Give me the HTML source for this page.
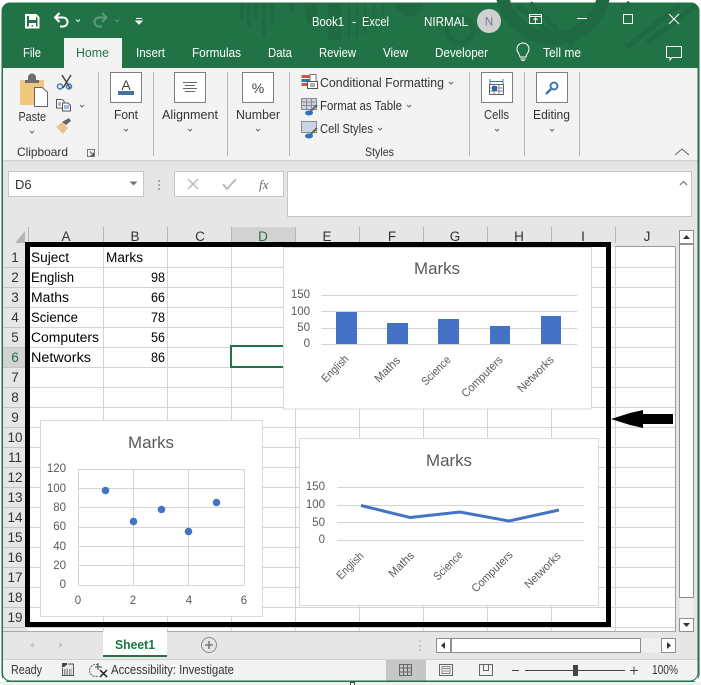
<!DOCTYPE html>
<html><head><meta charset="utf-8"><style>
html,body{margin:0;padding:0;background:#fff;width:701px;height:685px;overflow:hidden}
svg{display:block;font-family:"Liberation Sans",sans-serif}
.g{stroke:#d4d4d4;stroke-width:1;fill:none}
.cl{fill:#595959;font-size:11.5px}
.ax{fill:#595959;font-size:11.5px;text-anchor:end}
.tt{fill:#595959;font-size:17px;text-anchor:middle}
.c{fill:#000;font-size:13.5px}
.ch{fill:#333;font-size:13.5px;text-anchor:middle}
.w{fill:#fff;font-size:13px}
.r{fill:#333;font-size:13px}
.cv{fill:none;stroke:#666;stroke-width:1}
</style></head><body>
<svg width="701" height="685" viewBox="0 0 701 685" xmlns="http://www.w3.org/2000/svg">
<rect width="701" height="685" fill="#fff"/>
<!-- window -->
<rect x="2" y="3" width="697" height="679" rx="8" fill="#e6e6e6" stroke="#217346" stroke-width="1"/>
<path d="M2 68V11a8 8 0 0 1 8-8H691a8 8 0 0 1 8 8V68Z" fill="#217346"/>
<!-- title pattern -->
<g fill="none" stroke="#1f6a41">
<path d="M242 3V18M249 3V27M256 3V20M264 3V36M272 3V24" stroke-width="3.500"/>
<path d="M287 3H294V17Z" fill="#1f6a41" stroke="none"/>
<path d="M305 3H317V26H311Q305 20 305 14Z" fill="#1f6a41" stroke="none"/>
<path d="M328 3H341V40H328Z" fill="#1f6a41" stroke="none"/>
<path d="M349 3V37M357 3V37M365 3V35M374 3V28M383 3V14" stroke-width="2.500"/>
<path d="M396 3H423A13.500 13.500 0 0 1 396 3Z" fill="#1f6a41" stroke="none"/>
<circle cx="460" cy="30" r="13" stroke-width="5"/>
<circle cx="553" cy="-13" r="51.500" stroke-width="13"/>
<path d="M505 8L547 43M517 5L561 42M530 3L573 46" stroke-width="5"/>
<path d="M627 47L680 5M647 43L696 5M622 8L630 3" stroke-width="5"/>
</g>
<!-- tabs -->
<rect x="64" y="38" width="58" height="31" fill="#f3f3f3"/>
<rect x="3" y="68" width="695" height="92" fill="#f3f3f3"/>
<rect x="3" y="160" width="695" height="1.500" fill="#d2d2d2"/>
<!-- QAT -->
<path d="M26 15H36L38.500 17.500V27.500H26Z" fill="none" stroke="#fff" stroke-width="2"/>
<rect x="29" y="15" width="7" height="5" fill="#fff"/><path d="M29 23H36V27.500H33V25H31.500V27.500H29Z" fill="#fff"/>
<path d="M55 17.500H63a4.500 4.500 0 0 1 0 9H60" fill="none" stroke="#fff" stroke-width="2"/><path d="M59.500 13L55 17.500L59.500 22" fill="none" stroke="#fff" stroke-width="2"/>
<path d="M76 19.500l2 2 2-2" fill="none" stroke="#dfe" stroke-width="1"/>
<path d="M106 17.500H99a4.500 4.500 0 0 0 0 9H102" fill="none" stroke="#5d9a7c" stroke-width="2"/><path d="M102 13L106.500 17.500L102 22" fill="none" stroke="#5d9a7c" stroke-width="2"/>
<path d="M115 19.500l2 2 2-2" fill="none" stroke="#5d9a7c" stroke-width="1"/>
<path d="M136 18.500H142M136 21H142L139 24Z" fill="#fff" stroke="#fff" stroke-width="1"/>
<text x="312" y="26" class="w" textLength="32" lengthAdjust="spacingAndGlyphs">Book1</text>
<text x="352" y="26" class="w">-</text>
<text x="362" y="26" class="w" textLength="27" lengthAdjust="spacingAndGlyphs">Excel</text>
<text x="424" y="26" class="w" textLength="44" lengthAdjust="spacingAndGlyphs">NIRMAL</text>
<circle cx="489" cy="21" r="12" fill="#d0d0d0"/>
<text x="489" y="25.500" font-size="11.500" text-anchor="middle" fill="#76769a">N</text>
<!-- window buttons -->
<rect x="529.500" y="16.500" width="12" height="7" fill="none" stroke="#fff"/><path d="M529.500 16.500h12v-2h-12zM535.500 23.500v-5M533.500 20l2-2 2 2" fill="none" stroke="#fff"/>
<path d="M577 18.500H587" stroke="#fff" stroke-width="1"/>
<rect x="623.500" y="14.500" width="9" height="9" fill="none" stroke="#fff" stroke-width="1"/>
<path d="M669 14L679 24M679 14L669 24" stroke="#fff" stroke-width="1"/>
<!-- tab labels -->
<text x="23" y="57" class="w" textLength="18" lengthAdjust="spacingAndGlyphs">File</text>
<text x="76" y="57" font-size="13" fill="#217346" textLength="33" lengthAdjust="spacingAndGlyphs">Home</text>
<text x="136" y="57" class="w" textLength="29" lengthAdjust="spacingAndGlyphs">Insert</text>
<text x="192" y="57" class="w" textLength="49" lengthAdjust="spacingAndGlyphs">Formulas</text>
<text x="268" y="57" class="w" textLength="24" lengthAdjust="spacingAndGlyphs">Data</text>
<text x="319" y="57" class="w" textLength="37" lengthAdjust="spacingAndGlyphs">Review</text>
<text x="383" y="57" class="w" textLength="25" lengthAdjust="spacingAndGlyphs">View</text>
<text x="435" y="57" class="w" textLength="53" lengthAdjust="spacingAndGlyphs">Developer</text>
<path d="M520 57c0-3-3-4-3-8a6 6 0 0 1 12 0c0 4-3 5-3 8ZM520.500 59h5M521.500 60.500h3" fill="none" stroke="#fff"/>
<text x="543" y="57" class="w" textLength="38" lengthAdjust="spacingAndGlyphs">Tell me</text>
<path d="M666.500 46.500H681.500V57.500H672L670 60V57.500H666.500Z" fill="none" stroke="#fff"/>
<!-- ribbon separators -->
<path d="M98.500 72V156M153.500 72V156M227.500 72V156M289.500 72V156M469.500 72V156M524.500 72V156M579.500 72V156" stroke="#b9b9b9" stroke-width="1"/>
<!-- Paste -->
<path d="M20 80H44V105H20Z" fill="#f0c77c"/>
<path d="M28 80V77.500a4 4 0 0 1 8 0V80H39V83H25V80Z" fill="#6f6f6f"/>
<path d="M34.500 87.500H42L47.500 92V106.500H34.500Z" fill="#fff" stroke="#666"/>
<path d="M62 75L70 88M71 75L63 88" stroke="#444" stroke-width="1.500"/>
<circle cx="60" cy="86.500" r="2.500" fill="none" stroke="#3f78b5" stroke-width="1.500"/><circle cx="69" cy="86.500" r="2.500" fill="none" stroke="#3f78b5" stroke-width="1.500"/>
<path d="M56.500 99.500H62L64 101V108H56.500Z" fill="#fff" stroke="#555"/><path d="M62.500 103H68L70.500 105.500V111H62.500Z" fill="#fff" stroke="#555"/><path d="M58 103H61M58 105H61M64 106H69M64 108H69" stroke="#3f78b5"/>
<path d="M80 105l2 2 2-2" class="cv"/>
<path d="M56 127L62 122L68 128L63 134Z" fill="#e9c58c"/><path d="M62 122L66 125L71 121L69 118Z" fill="#666"/>
<text x="18.500" y="121" class="r" textLength="27.500" lengthAdjust="spacingAndGlyphs">Paste</text>
<path d="M30 131l2 2 2-2" class="cv"/>
<text x="17" y="156" font-size="12" fill="#333" textLength="51" lengthAdjust="spacingAndGlyphs">Clipboard</text>
<path d="M87.500 149.500H94.500V156.500H87.500Z" fill="none" stroke="#777"/><path d="M90 151.500L93.500 155.500M93.500 152.500V155.500H90.500" fill="none" stroke="#555"/>
<!-- group buttons -->
<g fill="#fff" stroke="#7f7f7f">
<rect x="110.500" y="72.500" width="31" height="30"/>
<rect x="174.500" y="72.500" width="31" height="30"/>
<rect x="242.500" y="72.500" width="31" height="30"/>
<rect x="481.500" y="72.500" width="31" height="30"/>
<rect x="536.500" y="72.500" width="31" height="30"/>
</g>
<text x="126" y="90" font-size="14" text-anchor="middle" fill="#444">A</text>
<rect x="118" y="91" width="16" height="4" fill="#4472a8"/>
<path d="M183 82.500H197M185 85.500H195M183 88.500H197M185 91.500H195" stroke="#666"/>
<text x="258" y="93" font-size="14" text-anchor="middle" fill="#444">%</text>
<path d="M490 81.500H503M490 79V84M503 79V84" stroke="#3f78b5"/>
<rect x="489.500" y="84.500" width="14" height="10" fill="none" stroke="#666"/><path d="M494 85V94M499 85V94M490 88H503M490 91H503" stroke="#888"/><rect x="492" y="86" width="5" height="5" fill="#2a65ae"/>
<circle cx="554" cy="86" r="3.500" fill="none" stroke="#3f78b5" stroke-width="2"/><path d="M551 89L546 94" stroke="#3f78b5" stroke-width="2.500"/>
<text x="114" y="119" class="r" textLength="24" lengthAdjust="spacingAndGlyphs">Font</text>
<text x="162" y="119" class="r" textLength="56" lengthAdjust="spacingAndGlyphs">Alignment</text>
<text x="236" y="119" class="r" textLength="44" lengthAdjust="spacingAndGlyphs">Number</text>
<text x="484" y="119" class="r" textLength="25" lengthAdjust="spacingAndGlyphs">Cells</text>
<text x="533" y="119" class="r" textLength="37" lengthAdjust="spacingAndGlyphs">Editing</text>
<path d="M124 129l2 2 2-2M188 129l2 2 2-2M256 129l2 2 2-2M495 129l2 2 2-2M550 129l2 2 2-2" class="cv"/>
<!-- styles -->
<rect x="301.500" y="75" width="8" height="3" fill="#d0573a"/><rect x="301.500" y="79" width="8" height="3" fill="#2e75b6"/><rect x="301.500" y="83" width="8" height="3" fill="#d0573a"/>
<rect x="310" y="74.500" width="6" height="7" fill="#fff" stroke="#777"/>
<rect x="307.500" y="81.500" width="10" height="7" fill="#fff" stroke="#555"/>
<path d="M310 84H315M310 86H315" stroke="#333" stroke-width=".7"/>
<g fill="none" stroke="#8a8a8a">
<rect x="301.500" y="98.500" width="15" height="11" fill="#c9d4e4"/><path d="M301.500 102H316.500M301.500 105.500H316.500M306.500 98.500V109.500M311.500 98.500V109.500"/>
<rect x="301.500" y="121.500" width="15" height="11" fill="#c9d4e4"/>
</g>
<path d="M310 112L317 105M310 135L317 128" stroke="#666" stroke-width="2"/>
<ellipse cx="309" cy="113" rx="4" ry="2.500" fill="#2e75b6"/><ellipse cx="309" cy="136" rx="4" ry="2.500" fill="#2e75b6"/>
<text x="320" y="87" class="r" textLength="124" lengthAdjust="spacingAndGlyphs">Conditional Formatting</text>
<text x="320" y="110" class="r" textLength="82" lengthAdjust="spacingAndGlyphs">Format as Table</text>
<text x="320" y="133" class="r" textLength="53" lengthAdjust="spacingAndGlyphs">Cell Styles</text>
<path d="M449 82l2 2 2-2M407 105l2 2 2-2M378 128l2 2 2-2" class="cv"/>
<text x="365" y="156" font-size="12" fill="#333" textLength="29" lengthAdjust="spacingAndGlyphs">Styles</text>
<path d="M675 155L682 149L689 155" fill="none" stroke="#666"/>
<!-- formula bar -->
<rect x="8.500" y="171.500" width="135" height="25" fill="#fff" stroke="#c6c6c6"/>
<text x="15" y="189" font-size="13" fill="#333">D6</text>
<path d="M129.500 181.500H137.500L133.500 185.500Z" fill="#777"/>
<path d="M159 180v2M159 184v2M159 188v2" stroke="#aaa" stroke-width="2"/>
<rect x="174.500" y="171.500" width="109" height="25" fill="#fff" stroke="#c6c6c6"/>
<path d="M188 179L198 189M198 179L188 189" stroke="#bbb" stroke-width="1.500"/>
<path d="M223 184L227 189L236 179" fill="none" stroke="#bbb" stroke-width="2"/>
<text x="259" y="189" font-size="13" font-style="italic" font-family="Liberation Serif" fill="#666">fx</text>
<rect x="287.500" y="171.500" width="404" height="45" fill="#fff" stroke="#c6c6c6"/>
<path d="M680 185L683.500 181.500L687 185" fill="none" stroke="#888" stroke-width="1.500"/>
<!-- column headers -->
<rect x="3" y="227" width="672" height="20" fill="#e6e6e6"/>
<rect x="231" y="227" width="64" height="20" fill="#d2d2d2"/>
<path d="M25 231V243H15Z" fill="#b5b5b5"/>
<path d="M28.500 227V243M103.500 227V243M167.500 227V243M231.500 227V243M295.500 227V243M359.500 227V243M423.500 227V243M487.500 227V243M551.500 227V243M615.500 227V243" stroke="#b5b5b5"/>
<text x="66" y="241" class="ch">A</text><text x="135" y="241" class="ch">B</text><text x="200" y="241" class="ch">C</text><text x="263" y="241" fill="#217346" font-size="13.500" text-anchor="middle">D</text><text x="327" y="241" class="ch">E</text><text x="392" y="241" class="ch">F</text><text x="455" y="241" class="ch">G</text><text x="519" y="241" class="ch">H</text><text x="583" y="241" class="ch">I</text><text x="647" y="241" class="ch">J</text>
<!-- sheet -->
<rect x="28" y="247" width="647" height="385" fill="#fff"/>
<path class="g" d="M28 267.500H675M28 287.500H675M28 307.500H675M28 327.500H675M28 347.500H675M28 367.500H675M28 387.500H675M28 407.500H675M28 427.500H675M28 447.500H675M28 467.500H675M28 487.500H675M28 507.500H675M28 527.500H675M28 547.500H675M28 567.500H675M28 587.500H675M28 607.500H675M28 627.500H675"/>
<path class="g" d="M103.500 247V632M167.500 247V632M231.500 247V632M295.500 247V632M359.500 247V632M423.500 247V632M487.500 247V632M551.500 247V632M615.500 247V632"/>
<path d="M675.500 247V632M615 246.500H675.500" stroke="#9a9a9a" fill="none"/>
<!-- row headers -->
<rect x="3" y="347" width="22" height="20" fill="#d2d2d2"/>
<path d="M3 267.500H25M3 287.500H25M3 307.500H25M3 327.500H25M3 347.500H25M3 367.500H25M3 387.500H25M3 407.500H25M3 427.500H25M3 447.500H25M3 467.500H25M3 487.500H25M3 507.500H25M3 527.500H25M3 547.500H25M3 567.500H25M3 587.500H25M3 607.500H25M3 627.500H25" stroke="#c4c4c4"/>
<g><text x="15" y="262" class="ch">1</text><text x="15" y="282" class="ch">2</text><text x="15" y="302" class="ch">3</text><text x="15" y="322" class="ch">4</text><text x="15" y="342" class="ch">5</text><text x="15" y="362" font-size="13.500" text-anchor="middle" fill="#217346">6</text><text x="15" y="382" class="ch">7</text><text x="15" y="402" class="ch">8</text><text x="15" y="422" class="ch">9</text><text x="15" y="442" class="ch">10</text><text x="15" y="462" class="ch">11</text><text x="15" y="482" class="ch">12</text><text x="15" y="502" class="ch">13</text><text x="15" y="522" class="ch">14</text><text x="15" y="542" class="ch">15</text><text x="15" y="562" class="ch">16</text><text x="15" y="582" class="ch">17</text><text x="15" y="602" class="ch">18</text><text x="15" y="622" class="ch">19</text></g>
<!-- cells -->
<text x="31" y="262" class="c" textLength="38" lengthAdjust="spacingAndGlyphs">Suject</text>
<text x="106" y="262" class="c" textLength="37" lengthAdjust="spacingAndGlyphs">Marks</text>
<text x="31" y="282" class="c" textLength="43" lengthAdjust="spacingAndGlyphs">English</text>
<text x="31" y="302" class="c" textLength="38" lengthAdjust="spacingAndGlyphs">Maths</text>
<text x="31" y="322" class="c" textLength="47" lengthAdjust="spacingAndGlyphs">Science</text>
<text x="31" y="342" class="c" textLength="68" lengthAdjust="spacingAndGlyphs">Computers</text>
<text x="31" y="362" class="c" textLength="60" lengthAdjust="spacingAndGlyphs">Networks</text>
<text x="151" y="282" class="c" textLength="14" lengthAdjust="spacingAndGlyphs">98</text><text x="151" y="302" class="c" textLength="14" lengthAdjust="spacingAndGlyphs">66</text><text x="151" y="322" class="c" textLength="14" lengthAdjust="spacingAndGlyphs">78</text><text x="151" y="342" class="c" textLength="14" lengthAdjust="spacingAndGlyphs">56</text><text x="151" y="362" class="c" textLength="14" lengthAdjust="spacingAndGlyphs">86</text>
<!-- selected -->
<rect x="231" y="346" width="60" height="21" fill="#fff" stroke="#217346" stroke-width="2"/>
<!-- chart 1 -->
<rect x="283.500" y="247.500" width="308" height="161.500" fill="#fff" stroke="#d9d9d9"/>
<text x="437" y="274" class="tt" textLength="46" lengthAdjust="spacingAndGlyphs">Marks</text>
<path class="g" d="M321 295.500H577M321 311.500H577M321 328.500H577M321 344.500H577"/>
<g fill="#4472c4"><rect x="336" y="312" width="21" height="32"/><rect x="387" y="323" width="21" height="21"/><rect x="438" y="319" width="21" height="25"/><rect x="490" y="326" width="20" height="18"/><rect x="541" y="316" width="20" height="28"/></g>
<text x="310" y="298" class="ax">150</text><text x="310" y="315" class="ax">100</text><text x="310" y="331" class="ax">50</text><text x="310" y="347" class="ax">0</text>
<text transform="translate(326,383) rotate(-45)" class="cl" textLength="33" lengthAdjust="spacingAndGlyphs">English</text>
<text transform="translate(379,383) rotate(-45)" class="cl" textLength="31" lengthAdjust="spacingAndGlyphs">Maths</text>
<text transform="translate(426,386) rotate(-45)" class="cl" textLength="36" lengthAdjust="spacingAndGlyphs">Science</text>
<text transform="translate(466,398) rotate(-45)" class="cl" textLength="53" lengthAdjust="spacingAndGlyphs">Computers</text>
<text transform="translate(522,393) rotate(-45)" class="cl" textLength="46" lengthAdjust="spacingAndGlyphs">Networks</text>
<!-- chart 2 -->
<rect x="299.500" y="438.500" width="299" height="167" fill="#fff" stroke="#d9d9d9"/>
<text x="449" y="466" class="tt" textLength="46" lengthAdjust="spacingAndGlyphs">Marks</text>
<path class="g" d="M337 487.500H584M337 505.500H584M337 522.500H584M337 540.500H584"/>
<path d="M361 505.500L410 517.500L460 512L509 521L559 510" fill="none" stroke="#4472c4" stroke-width="3"/>
<text x="325" y="490" class="ax">150</text><text x="325" y="508" class="ax">100</text><text x="325" y="526" class="ax">50</text><text x="325" y="543" class="ax">0</text>
<text transform="translate(341,580) rotate(-45)" class="cl" textLength="33" lengthAdjust="spacingAndGlyphs">English</text>
<text transform="translate(393,578) rotate(-45)" class="cl" textLength="31" lengthAdjust="spacingAndGlyphs">Maths</text>
<text transform="translate(438,581) rotate(-45)" class="cl" textLength="36" lengthAdjust="spacingAndGlyphs">Science</text>
<text transform="translate(476,593) rotate(-45)" class="cl" textLength="53" lengthAdjust="spacingAndGlyphs">Computers</text>
<text transform="translate(529,589) rotate(-45)" class="cl" textLength="46" lengthAdjust="spacingAndGlyphs">Networks</text>
<!-- chart 3 -->
<rect x="40.500" y="420.500" width="222" height="196" fill="#fff" stroke="#d9d9d9"/>
<text x="151" y="448" class="tt" textLength="46" lengthAdjust="spacingAndGlyphs">Marks</text>
<path class="g" d="M78.500 469.500H244.500M78.500 488.500H244.500M78.500 507.500H244.500M78.500 527.500H244.500M78.500 546.500H244.500M78.500 565.500H244.500M78.500 585.500H244.500M78.500 469V585M133.500 469V585M188.500 469V585M244.500 469V585"/>
<g fill="#4472c4"><circle cx="105.500" cy="490.500" r="3.800"/><circle cx="133.500" cy="521.500" r="3.800"/><circle cx="161.500" cy="509.500" r="3.800"/><circle cx="188.500" cy="531.500" r="3.800"/><circle cx="216.500" cy="502.500" r="3.800"/></g>
<text x="66" y="472" class="ax">120</text><text x="66" y="492" class="ax">100</text><text x="66" y="511" class="ax">80</text><text x="66" y="530" class="ax">60</text><text x="66" y="550" class="ax">40</text><text x="66" y="569" class="ax">20</text><text x="66" y="588" class="ax">0</text>
<text x="78" y="604" font-size="11.500" fill="#595959" text-anchor="middle">0</text><text x="133" y="604" font-size="11.500" fill="#595959" text-anchor="middle">2</text><text x="189" y="604" font-size="11.500" fill="#595959" text-anchor="middle">4</text><text x="244" y="604" font-size="11.500" fill="#595959" text-anchor="middle">6</text>
<!-- black frame -->
<rect x="27.500" y="244.500" width="581" height="380" fill="none" stroke="#000" stroke-width="5"/>
<!-- arrow -->
<path d="M611 419L630 413L643 410V414H673V424H643V428L630 425Z" fill="#000"/>
<!-- vertical scroll -->
<rect x="676" y="228" width="22" height="404" fill="#e6e6e6"/>
<rect x="679.500" y="230.500" width="14" height="13" fill="#fff" stroke="#8f8f8f"/>
<path d="M683 239L686.500 235L690 239Z" fill="#333"/>
<rect x="679.500" y="244.500" width="14" height="353" fill="#fff" stroke="#8f8f8f"/>
<rect x="680" y="598" width="13" height="20" fill="#f0f0f0"/>
<rect x="679.500" y="618.500" width="14" height="13" fill="#fff" stroke="#8f8f8f"/>
<path d="M683 623L686.500 627L690 623Z" fill="#333"/>
<!-- sheet tab bar -->
<rect x="3" y="632" width="695" height="27" fill="#e6e6e6"/>
<path d="M3 631.500H675.500" stroke="#a8a8a8"/>
<rect x="103" y="631" width="64" height="24" fill="#fff"/>
<rect x="103" y="655" width="64" height="2" fill="#217346"/>
<text x="115" y="649" font-size="13" font-weight="bold" fill="#217346" textLength="40" lengthAdjust="spacingAndGlyphs">Sheet1</text>
<path d="M34 642L30 645L34 648ZM59 642L63 645L59 648Z" fill="#c4c4c4"/>
<circle cx="209" cy="645" r="7.500" fill="none" stroke="#8a8a8a"/><path d="M205 645H213M209 641V649" stroke="#777" stroke-width="1.500"/>
<path d="M420 640v2M420 645v2M420 649v2" stroke="#bbb" stroke-width="1.500"/>
<rect x="436.500" y="638.500" width="238" height="14" fill="#f0f0f0" stroke="none"/>
<rect x="436.500" y="638.500" width="14" height="14" fill="#fff" stroke="#8f8f8f"/>
<path d="M445 642L441 645.500L445 649Z" fill="#333"/>
<rect x="451.500" y="638.500" width="189" height="14" fill="#fff" stroke="#8f8f8f"/>
<rect x="661.500" y="638.500" width="14" height="14" fill="#fff" stroke="#8f8f8f"/>
<path d="M667 642L671 645.500L667 649Z" fill="#333"/>
<!-- status bar -->
<rect x="3" y="659.500" width="695" height="21.500" fill="#f3f3f3"/>
<path d="M3 659.500H698" stroke="#d0d0d0"/>
<text x="11" y="674" font-size="12.500" fill="#333" textLength="31" lengthAdjust="spacingAndGlyphs">Ready</text>
<rect x="62" y="663" width="5" height="4" fill="#444"/><path d="M68 664H73.500V675.500H62.500V668" fill="#e8e8e8" stroke="#555"/><path d="M64 670H72M64 672H72M64 674H72" stroke="#444" stroke-dasharray="1.500 1"/>
<path d="M98 665a6 6 0 1 0 0 11" fill="none" stroke="#555" stroke-dasharray="2 1"/><path d="M98 663V670M95 667H102" stroke="#444"/><path d="M100 670L107 677M107 670L100 677" stroke="#222" stroke-width="1.500"/>
<text x="111" y="674" font-size="12.500" fill="#333" textLength="123" lengthAdjust="spacingAndGlyphs">Accessibility: Investigate</text>
<rect x="386" y="660" width="40" height="21" fill="#c6c6c6"/>
<path d="M399.500 664.500H411.500V675.500H399.500ZM403.500 664.500V675.500M407.500 664.500V675.500M399.500 668H411.500M399.500 672H411.500" fill="none" stroke="#666"/>
<rect x="439.500" y="664.500" width="13" height="11" fill="none" stroke="#666"/><rect x="442" y="666.500" width="8" height="7" fill="none" stroke="#888"/><path d="M443 668.500H449M443 671H449" stroke="#888"/>
<path d="M479.500 664.500H492.500V675.500H479.500ZM483.500 664.500V670.500H488.500V664.500" fill="none" stroke="#666"/>
<path d="M512 670.500H519M525 670.500H625M630 670.500H638M634 666.500V674.500" stroke="#444"/>
<rect x="573" y="665" width="5" height="11" fill="#444"/>
<text x="652" y="674" font-size="12.500" fill="#333" textLength="26" lengthAdjust="spacingAndGlyphs">100%</text>
<!-- outer lines -->
<path d="M2.500 68V673a8 8 0 0 0 8 8H690a8 8 0 0 0 8-8V68" fill="none" stroke="#217346"/>
<rect x="0" y="682" width="701" height="3" fill="#f0f0f0"/>
<rect x="350.500" y="682.500" width="4" height="3" fill="#fff" stroke="#444"/>
</svg>
</body></html>
